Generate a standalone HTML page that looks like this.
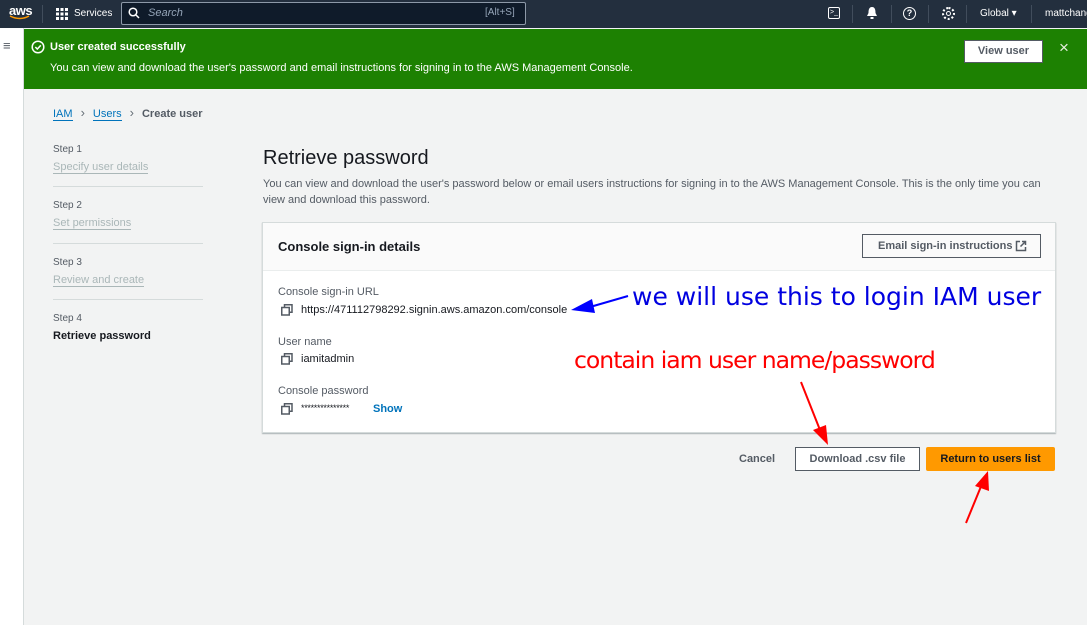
<!DOCTYPE html>
<html><head><meta charset="utf-8"><style>
*{box-sizing:border-box;margin:0;padding:0}
body{width:1087px;height:625px;overflow:hidden;background:#f2f3f3;font-family:"Liberation Sans",sans-serif;position:relative;color:#16191f}
.a{position:absolute}
.nav{left:0;top:0;width:1087px;height:28px;background:#232f3e;color:#fff;font-size:11px}
.side{left:0;top:28px;width:24px;height:597px;background:#fff;border-right:1px solid #d5dbdb}
.ban{left:24px;top:29px;width:1063px;height:60px;background:#1d8102;color:#fff}
.lbl{font-size:11px;color:#545b64}
.val{font-size:11px;color:#16191f}
</style></head><body>
<div class="a nav">
 <div class="a" style="left:9px;top:3px;font-size:13px;font-weight:bold;letter-spacing:-0.5px">aws</div>
 <svg class="a" style="left:9px;top:15px" width="22" height="6"><path d="M1 1Q11 6 20 1" stroke="#f90" stroke-width="1.5" fill="none"/></svg>
 <div class="a" style="left:42px;top:5px;width:1px;height:18px;background:#414d5c"></div>
 <svg class="a" style="left:56px;top:8px" width="12" height="12" fill="#fff"><rect x="0" y="0" width="3" height="3"/><rect x="4.5" y="0" width="3" height="3"/><rect x="9" y="0" width="3" height="3"/><rect x="0" y="4.5" width="3" height="3"/><rect x="4.5" y="4.5" width="3" height="3"/><rect x="9" y="4.5" width="3" height="3"/><rect x="0" y="9" width="3" height="3"/><rect x="4.5" y="9" width="3" height="3"/><rect x="9" y="9" width="3" height="3"/></svg>
 <div class="a" style="left:74px;top:8px;font-size:10px">Services</div>
 <div class="a" style="left:121px;top:2px;width:405px;height:23px;border:1px solid #8d99a8;background:#0f1b2a;border-radius:2px"></div>
 <svg class="a" style="left:128px;top:7px" width="12" height="12"><circle cx="5" cy="5" r="3.8" stroke="#fff" stroke-width="1.5" fill="none"/><path d="M8 8l3 3" stroke="#fff" stroke-width="1.5"/></svg>
 <div class="a" style="left:148px;top:7px;font-size:11px;font-style:italic;color:#95a5b8">Search</div>
 <div class="a" style="left:485px;top:7px;font-size:10px;color:#95a5b8">[Alt+S]</div>
 <div class="a" style="left:828px;top:7px;width:12px;height:12px;border:1.5px solid #fff;border-radius:2px;font-size:7px;line-height:9px;padding-left:1px">&gt;_</div>
 <div class="a" style="left:852px;top:5px;width:1px;height:18px;background:#414d5c"></div>
 <svg class="a" style="left:866px;top:6px" width="12" height="14"><path d="M6 1C3 1 2.5 4 2.5 7L1 10h10L9.5 7C9.5 4 9 1 6 1z" fill="#fff"/><rect x="4.5" y="11" width="3" height="2" fill="#fff"/></svg>
 <div class="a" style="left:891px;top:5px;width:1px;height:18px;background:#414d5c"></div>
 <div class="a" style="left:903px;top:7px;width:13px;height:13px;border:1.8px solid #fff;border-radius:50%;font-size:9px;font-weight:bold;text-align:center;line-height:10px">?</div>
 <div class="a" style="left:928px;top:5px;width:1px;height:18px;background:#414d5c"></div>
 <div class="a" style="left:942px;top:7px;width:13px;height:13px;border:2.5px dotted #fff;border-radius:50%"></div><div class="a" style="left:946px;top:11px;width:5px;height:5px;border:1.5px solid #fff;border-radius:50%"></div>
 <div class="a" style="left:966px;top:5px;width:1px;height:18px;background:#414d5c"></div>
 <div class="a" style="left:980px;top:8px;font-size:10px">Global ▾</div>
 <div class="a" style="left:1031px;top:5px;width:1px;height:18px;background:#414d5c"></div>
 <div class="a" style="left:1045px;top:8px;font-size:10px;white-space:nowrap">mattchang</div>
</div>
<div class="a side"><div class="a" style="left:3px;top:12px;font-size:13px;color:#545b64;line-height:12px">≡</div></div>
<div class="a ban">
 <svg class="a" style="left:7px;top:11px" width="14" height="14"><circle cx="7" cy="7" r="5.8" stroke="#fff" stroke-width="1.5" fill="none"/><path d="M4.3 7l2 2 3.5-3.7" stroke="#fff" stroke-width="1.5" fill="none"/></svg>
 <div class="a" style="left:26px;top:12px;font-size:11px;font-weight:bold">User created successfully</div>
 <div class="a" style="left:26px;top:33px;font-size:11px">You can view and download the user's password and email instructions for signing in to the AWS Management Console.</div>
 <div class="a" style="left:940px;top:11px;width:79px;height:23px;background:#fff;border:1px solid #545b64;color:#545b64;font-size:11px;font-weight:bold;text-align:center;line-height:21px">View user</div>
 <div class="a" style="left:1035px;top:9px;font-size:17px;color:#e8f0e0">×</div>
</div>
<div class="a" style="left:53px;top:105px;font-size:11px;color:#0073bb"><span style="border-bottom:1px solid #0073bb">IAM</span><span style="color:#687078;margin:0 8px;font-size:13px">›</span><span style="border-bottom:1px solid #0073bb">Users</span><span style="color:#687078;margin:0 8px;font-size:13px">›</span><span style="color:#545b64;font-weight:bold">Create user</span></div>
<div class="a" style="left:53px;top:144px;font-size:10px;color:#545b64">Step 1</div>
<div class="a" style="left:53px;top:161px;font-size:11px;color:#aab7b8;border-bottom:1px solid #aab7b8">Specify user details</div>
<div class="a" style="left:53px;top:186px;width:150px;height:1px;background:#d5dbdb"></div>
<div class="a" style="left:53px;top:200px;font-size:10px;color:#545b64">Step 2</div>
<div class="a" style="left:53px;top:217px;font-size:11px;color:#aab7b8;border-bottom:1px solid #aab7b8">Set permissions</div>
<div class="a" style="left:53px;top:243px;width:150px;height:1px;background:#d5dbdb"></div>
<div class="a" style="left:53px;top:257px;font-size:10px;color:#545b64">Step 3</div>
<div class="a" style="left:53px;top:274px;font-size:11px;color:#aab7b8;border-bottom:1px solid #aab7b8">Review and create</div>
<div class="a" style="left:53px;top:299px;width:150px;height:1px;background:#d5dbdb"></div>
<div class="a" style="left:53px;top:313px;font-size:10px;color:#545b64">Step 4</div>
<div class="a" style="left:53px;top:330px;font-size:11px;font-weight:bold">Retrieve password</div>
<div class="a" style="left:263px;top:147px;font-size:20px">Retrieve password</div>
<div class="a" style="left:263px;top:176px;width:790px;font-size:11px;color:#545b64;line-height:16px">You can view and download the user's password below or email users instructions for signing in to the AWS Management Console. This is the only time you can view and download this password.</div>
<div class="a" style="left:262px;top:222px;width:794px;height:211px;background:#fff;border:1px solid #d5dbdb;box-shadow:0 1px 1px rgba(0,28,36,.3)">
 <div style="height:48px;background:#fafafa;border-bottom:1px solid #eaeded"></div>
 <div class="a" style="left:15px;top:16px;font-size:13px;font-weight:bold">Console sign-in details</div>
 <div class="a" style="left:599px;top:11px;width:179px;height:24px;border:1px solid #545b64;font-size:11px;font-weight:bold;color:#545b64;line-height:22px;padding-left:15px">Email sign-in instructions</div>
 <svg class="a" style="left:752px;top:17px" width="12" height="12"><path d="M5 1.5H1.5v9h9V7" stroke="#545b64" stroke-width="1.5" fill="none"/><path d="M7 1.5h3.5V5M10.5 1.5L5.5 6.5" stroke="#545b64" stroke-width="1.5" fill="none"/></svg>
 <div class="a lbl" style="left:15px;top:63px">Console sign-in URL</div>
 <svg class="a" style="left:18px;top:81px" width="12" height="12"><rect x="3.5" y="0.75" width="7.5" height="7.5" stroke="#545b64" stroke-width="1.5" fill="none"/><rect x="0.75" y="3.5" width="7.5" height="7.5" stroke="#545b64" stroke-width="1.5" fill="#fff"/></svg>
 <div class="a val" style="left:38px;top:81px">https://471112798292.signin.aws.amazon.com/console</div>
 <div class="a lbl" style="left:15px;top:113px">User name</div>
 <svg class="a" style="left:18px;top:130px" width="12" height="12"><rect x="3.5" y="0.75" width="7.5" height="7.5" stroke="#545b64" stroke-width="1.5" fill="none"/><rect x="0.75" y="3.5" width="7.5" height="7.5" stroke="#545b64" stroke-width="1.5" fill="#fff"/></svg>
 <div class="a val" style="left:38px;top:130px">iamitadmin</div>
 <div class="a lbl" style="left:15px;top:162px">Console password</div>
 <svg class="a" style="left:18px;top:180px" width="12" height="12"><rect x="3.5" y="0.75" width="7.5" height="7.5" stroke="#545b64" stroke-width="1.5" fill="none"/><rect x="0.75" y="3.5" width="7.5" height="7.5" stroke="#545b64" stroke-width="1.5" fill="#fff"/></svg>
 <div class="a val" style="left:38px;top:180px;font-size:9px;letter-spacing:-0.3px">***************</div>
 <div class="a" style="left:110px;top:180px;font-size:11px;font-weight:bold;color:#0073bb">Show</div>
</div>
<div class="a" style="left:739px;top:453px;font-size:11px;font-weight:bold;color:#545b64">Cancel</div>
<div class="a" style="left:795px;top:447px;width:125px;height:24px;background:#fff;border:1px solid #545b64;font-size:11px;font-weight:bold;color:#545b64;text-align:center;line-height:22px">Download .csv file</div>
<div class="a" style="left:926px;top:447px;width:129px;height:24px;background:#ff9900;border-radius:2px;font-size:11px;font-weight:bold;color:#16191f;text-align:center;line-height:24px">Return to users list</div>
<div class="a" style="left:632px;top:282px;font-size:25px;color:#0000e0;font-family:'DejaVu Sans',sans-serif;white-space:nowrap;letter-spacing:0px">we will use this to login IAM user</div>
<div class="a" style="left:574px;top:346px;font-size:23.5px;color:#f00;font-family:'DejaVu Sans',sans-serif;white-space:nowrap;letter-spacing:-1px">contain iam user name/password</div>
<svg class="a" style="left:0;top:0" width="1087" height="625">
 <path d="M628 296L590 307" stroke="#00f" stroke-width="2"/><path d="M571 310L592 299L595 313z" fill="#00f"/>
 <path d="M801 382L820 430" stroke="#f00" stroke-width="2"/><path d="M828 445L813 430L826 425z" fill="#f00"/>
 <path d="M966 523L982 484" stroke="#f00" stroke-width="2"/><path d="M988 471L989 491L975 486z" fill="#f00"/>
</svg>
</body></html>
